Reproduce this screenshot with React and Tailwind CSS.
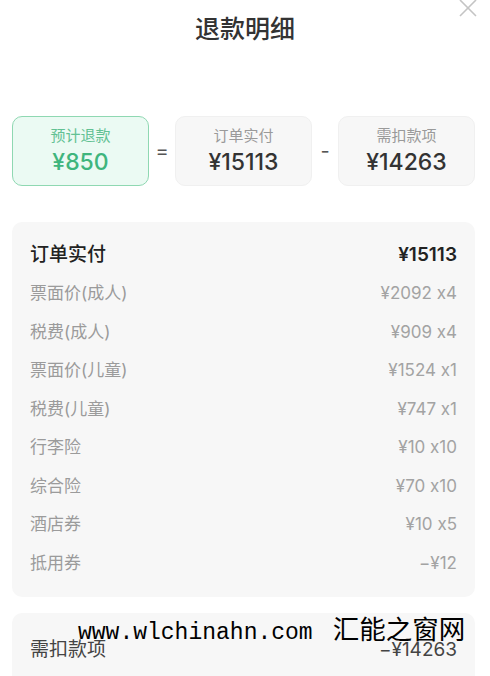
import React from "react";

const rows = [
  ["票面价(成人)", "¥2092 x4"],
  ["税费(成人)", "¥909 x4"],
  ["票面价(儿童)", "¥1524 x1"],
  ["税费(儿童)", "¥747 x1"],
  ["行李险", "¥10 x10"],
  ["综合险", "¥70 x10"],
  ["酒店券", "¥10 x5"],
  ["抵用券", "−¥12"],
];

export default function App() {
  return (
    <div className="relative w-[490px] h-[676px] overflow-hidden bg-white text-[#333] font-['Inter','Noto_Sans_CJK_SC',sans-serif] [font-feature-settings:'calt'_0]">
      <svg className="absolute left-[458px] top-[-2px]" width="20" height="20" viewBox="0 0 20 20">
        <path d="M2 2 L18 18 M18 2 L2 18" stroke="#c4c4c4" strokeWidth="1.6" fill="none" />
      </svg>

      <div className="h-[60px] flex items-center justify-center text-[25px] font-medium text-[#333]">
        退款明细
      </div>

      <div className="mt-[56px] flex items-center px-[12px]">
        <div className="w-[137px] h-[70px] rounded-[10px] border border-[#8fd8b2] bg-[#ebfaf3] flex flex-col items-center justify-center">
          <div className="text-[15px] leading-[20px] text-[#62c193]">预计退款</div>
          <div className="text-[23px] leading-[28px] font-medium text-[#3fb57d] mt-[2px]">¥850</div>
        </div>
        <div className="w-[26px] text-center text-[20px] text-[#555]">=</div>
        <div className="w-[137px] h-[70px] rounded-[10px] border border-[#f0f0f0] bg-[#f7f7f7] flex flex-col items-center justify-center">
          <div className="text-[15px] leading-[20px] text-[#9a9a9a]">订单实付</div>
          <div className="text-[23px] leading-[28px] font-medium text-[#333] mt-[2px]">¥15113</div>
        </div>
        <div className="w-[26px] text-center text-[20px] text-[#555]">-</div>
        <div className="w-[137px] h-[70px] rounded-[10px] border border-[#f0f0f0] bg-[#f7f7f7] flex flex-col items-center justify-center">
          <div className="text-[15px] leading-[20px] text-[#9a9a9a]">需扣款项</div>
          <div className="text-[23px] leading-[28px] font-medium text-[#333] mt-[2px]">¥14263</div>
        </div>
      </div>

      <div className="mt-[36px] mx-[12px] w-[463px] rounded-[10px] bg-[#f7f7f7] pt-[14px] pb-[14px] px-[18px]">
        <div className="h-[38.5px] flex items-center justify-between">
          <span className="text-[19px] font-medium text-[#222]">订单实付</span>
          <span className="text-[19px] font-semibold text-[#222]">¥15113</span>
        </div>
        {rows.map(([l, v]) => (
          <div key={l} className="h-[38.5px] flex items-center justify-between">
            <span className="text-[17px] text-[#9b9b9b]">{l}</span>
            <span className="text-[17px] text-[#a3a3a3]">{v}</span>
          </div>
        ))}
      </div>

      <div className="mt-[16px] mx-[12px] w-[463px] h-[80px] rounded-[10px] bg-[#f7f7f7] px-[18px] pt-[25px]">
        <div className="h-[26px] flex items-center justify-between">
          <span className="text-[19px] text-[#444]">需扣款项</span>
          <span className="text-[19px] text-[#444]">−¥14263</span>
        </div>
      </div>

      <div className="absolute left-[78px] top-[613px] text-[23px] leading-[30px] text-black whitespace-nowrap font-['Liberation_Mono','Noto_Sans_CJK_SC',monospace]">
        www.wlchinahn.com<span className="ml-[20px] text-[26.5px] font-['Noto_Sans_CJK_SC',sans-serif]">汇能之窗网</span>
      </div>
    </div>
  );
}
